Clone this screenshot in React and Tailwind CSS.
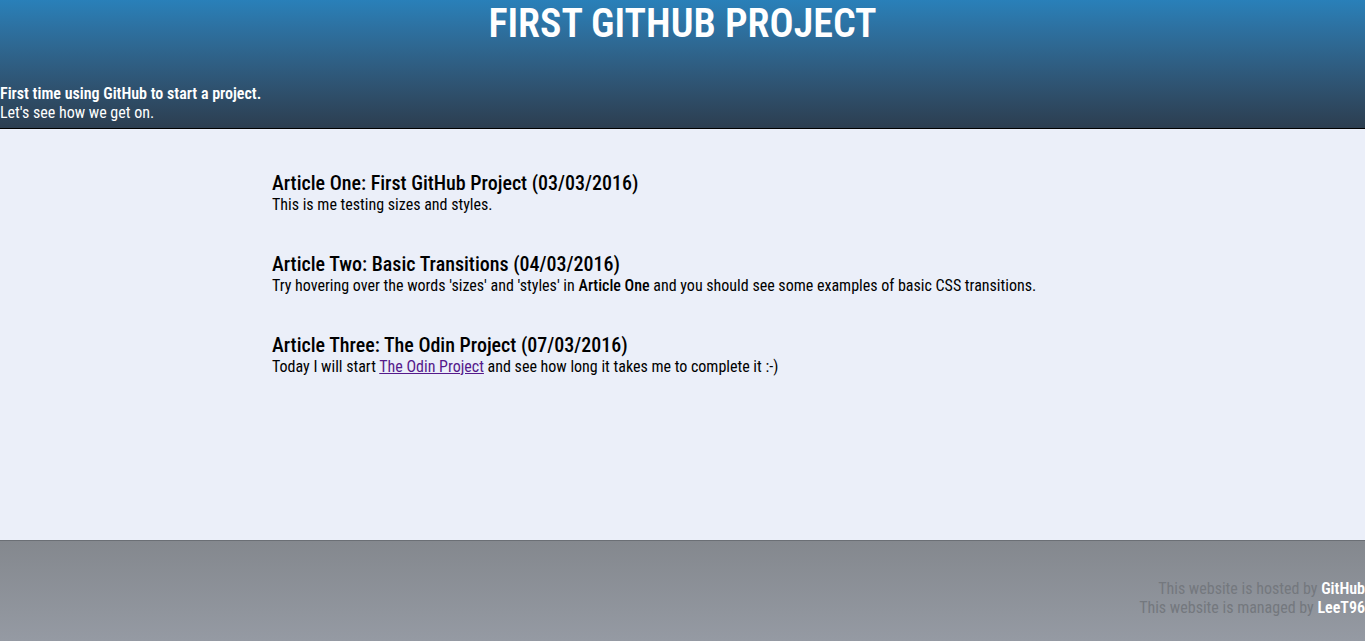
export default function App() {
  const font = { fontFamily: '"Roboto Condensed", Roboto, "Liberation Sans", sans-serif', fontStretch: 'condensed' };

  return (
    <div className="min-h-[641px] flex flex-col" style={font}>
      <header className="h-[129px] border-b border-black bg-gradient-to-b from-[#2980b9] to-[#2c3e50] text-white flex flex-col">
        <h1 className="text-[40px] font-semibold leading-[48px] text-center">FIRST GITHUB PROJECT</h1>
        <div className="mt-auto pb-[6px] text-[16px] leading-[19px]">
          <p className="font-semibold">First time using GitHub to start a project.</p>
          <p>Let's see how we get on.</p>
        </div>
      </header>

      <main className="h-[411px] bg-[#ebeff9] pl-[272px] pt-[42px] text-black">
        <article className="mb-[38px]">
          <h2 className="text-[20px] font-medium leading-[24px]">Article One: First GitHub Project (03/03/2016)</h2>
          <p className="text-[16px] leading-[19px]">This is me testing sizes and styles.</p>
        </article>
        <article className="mb-[38px]">
          <h2 className="text-[20px] font-medium leading-[24px]">Article Two: Basic Transitions (04/03/2016)</h2>
          <p className="text-[16px] leading-[19px]">
            Try hovering over the words 'sizes' and 'styles' in <b className="font-medium">Article One</b> and you should see some examples of basic CSS transitions.
          </p>
        </article>
        <article>
          <h2 className="text-[20px] font-medium leading-[24px]">Article Three: The Odin Project (07/03/2016)</h2>
          <p className="text-[16px] leading-[19px]">
            Today I will start <a href="#" className="text-[#551a8b] underline">The Odin Project</a> and see how long it takes me to complete it :-)
          </p>
        </article>
      </main>

      <footer className="flex-1 border-t border-[#6b6f75] bg-gradient-to-b from-[#84888e] to-[#959aa3] flex flex-col items-end pt-[38px] text-[16px] leading-[19px] text-[#74787e]">
        <p>This website is hosted by <b className="text-white font-semibold">GitHub</b></p>
        <p>This website is managed by <b className="text-white font-semibold">LeeT96</b></p>
      </footer>
    </div>
  );
}
